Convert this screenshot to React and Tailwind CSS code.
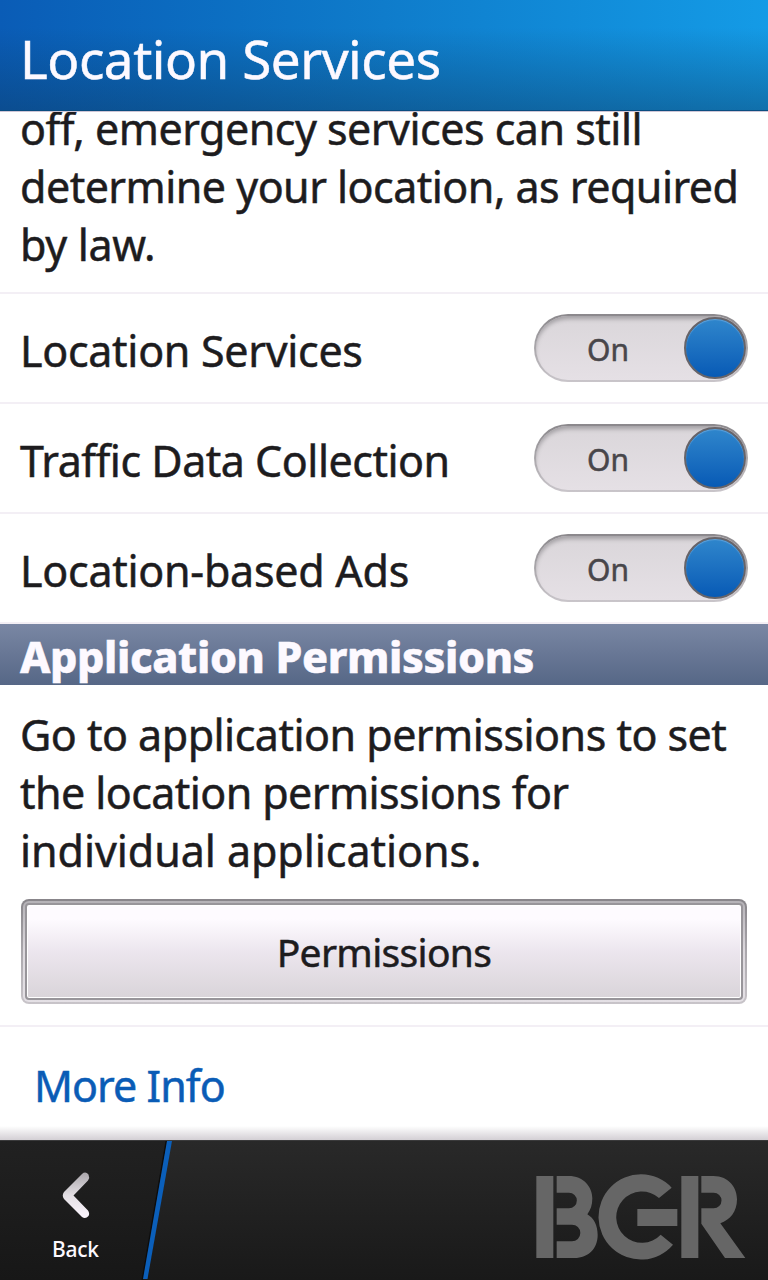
function Line({ className, children }) {
  return <span className={`block whitespace-nowrap ${className}`}>{children}</span>;
}

function Toggle() {
  return (
    <div className="flex h-[68px] w-[214px] items-center rounded-full bg-linear-to-b from-[#8b888c] via-[#aaa7ab] to-[#c9c5ca] p-[2px]">
      <div className="flex h-full w-full items-center justify-between rounded-full bg-linear-to-b from-[#dad6da] to-[#e5e0e5] pl-[51px] shadow-[inset_0_4px_4px_-1px_#a3a0a4]">
        <span className="pt-[3px] text-[30px] leading-[41px] text-[#48464a]">On</span>
        <span className="h-[62px] w-[62px] rounded-full border-2 border-[#676469] bg-linear-to-b from-[#2f86cc] to-[#075ab5] shadow-[inset_0_1px_1px_#62a4dc]" />
      </div>
    </div>
  );
}

function Row({ label, className }) {
  return (
    <div className="flex h-[110px] items-center justify-between border-t-2 border-[#f3eff5] pr-5 pl-5">
      <span className={`pt-[6px] whitespace-nowrap ${className}`}>{label}</span>
      <Toggle />
    </div>
  );
}

function Logo() {
  return (
    <svg className="mt-[32px] mr-[22px] h-[87px] w-[210px] shrink-0" viewBox="50 189 630 261" fill="#666">
      <rect x="51" y="198" width="51" height="246" />
      <path d="M112 198H148C192 198 219 230 219 265C219 285 214 300 204 313C224 325 235 347 235 375C235 415 208 444 165 444H112V394H158A25 25 0 0 0 158 344H112V295H149A23.500 23.500 0 0 0 149 248H112Z" />
      <path d="M457 233A127 128 0 1 0 461 404L424 374A77 77 0 1 1 419 264Z" />
      <rect x="354" y="297" width="120" height="51" />
      <rect x="486" y="198" width="51" height="246" />
      <path d="M546 198H582C630 198 653 235 653 268C653 305 632 330 603 340L678 444H617L546 341V295H583A23.500 23.500 0 0 0 583 248H546Z" />
    </svg>
  );
}

export default function App() {
  return (
    <div className="flex h-[1280px] w-[768px] flex-col overflow-hidden bg-white font-['Noto_Sans',sans-serif] text-[43px] leading-[58px] font-normal text-[#1d1c1e] [-webkit-text-stroke:0.5px_currentColor]">
      <header className="z-10 h-[112px] shrink-0 border-b border-[#cfc6d6] bg-linear-to-r from-[#0a5cb6] via-[#0f7ccb] to-[#149be6]">
        <div className="flex h-full items-center bg-linear-to-b from-transparent from-25% to-[#0c3a62]/45 pl-5 shadow-[inset_0_-1px_0_#0b4d80]">
          <h1 className="pt-[7px] text-[53px] leading-[72px] tracking-[-0.47px] whitespace-nowrap text-[#fdf9ff]">Location Services</h1>
        </div>
      </header>

      <main className="flex min-h-0 flex-1 flex-col">
        <p className="-mt-[12px] h-[192px] shrink-0 pl-5">
          <Line className="tracking-[-0.5px]">off, emergency services can still</Line>
          <Line className="tracking-[-0.53px]">determine your location, as required</Line>
          <Line className="tracking-[-0.35px]">by law.</Line>
        </p>
        <Row label="Location Services" className="tracking-[-0.3px]" />
        <Row label="Traffic Data Collection" className="tracking-[-0.5px]" />
        <Row label="Location-based Ads" className="tracking-[-0.27px]" />
        <h2 className="flex h-[63px] shrink-0 items-center border-t-2 border-[#f3eff5] bg-linear-to-b from-[#7b88a5] to-[#566786] bg-origin-border pt-[4px] pl-5 font-extrabold tracking-[-0.38px] whitespace-nowrap text-[#fdf9ff]">
          Application Permissions
        </h2>
        <p className="shrink-0 pt-[21px] pl-5">
          <Line className="tracking-[-0.52px]">Go to application permissions to set</Line>
          <Line className="tracking-[-0.58px]">the location permissions for</Line>
          <Line className="tracking-[-0.06px]">individual applications.</Line>
        </p>
        <div className="mx-[21px] mt-[19px] h-[105px] shrink-0 rounded-[8px] bg-linear-to-b from-[#88858a] via-[#aaa7ac] to-[#c8c4c9] p-[2px]">
          <div className="h-full rounded-[6px] bg-linear-to-b from-[#b5b2b7] via-[#dcd8dd] to-[#e4e0e5] p-[2px]">
            <button className="flex h-full w-full items-center justify-center rounded-[4px] border-2 border-[#98959a] bg-linear-to-b from-[#fefbff] from-15% via-[#ece6ee] via-50% to-[#d9d4d9] text-[39px] leading-[53px] tracking-[-0.67px] shadow-[inset_0_0_0_1px_#fff]">
              Permissions
            </button>
          </div>
        </div>
        <div className="mt-[21px] flex h-[115px] shrink-0 flex-col justify-between border-t-2 border-[#f3eff5]">
          <a className="block pt-[30px] pl-[34px] tracking-[-0.95px] whitespace-nowrap text-[#0a5cb6]">More Info</a>
          <div className="h-[14px] bg-linear-to-b from-white to-[#d3cfd4]" />
        </div>
      </main>

      <footer className="flex h-[140px] shrink-0 justify-between border-t border-[#3a3a3b] bg-linear-to-b from-[#292929] to-[#191919]">
        <div className="relative h-full w-[176px] shrink-0">
          <svg className="absolute inset-0 h-[139px] w-[176px]" viewBox="0 0 176 139">
            <defs>
              <linearGradient id="tab" x1="0" y1="0" x2="0" y2="1">
                <stop offset="0" stopColor="#212121" />
                <stop offset="1" stopColor="#171717" />
              </linearGradient>
              <linearGradient id="arrow" x1="0" y1="0" x2="0" y2="1">
                <stop offset="0" stopColor="#aaa6ab" />
                <stop offset="0.5" stopColor="#e3dfe4" />
                <stop offset="1" stopColor="#fbf5fd" />
              </linearGradient>
            </defs>
            <path d="M0 0H167L143 139H0Z" fill="url(#tab)" />
            <path d="M166.300 0L142.300 139" stroke="#0c0c0c" strokeWidth="1.500" />
            <path d="M167 0H172L147.500 138H143Z" fill="#0b5fba" />
            <path d="M82 33Q85.500 30 88.500 33.500Q90 36.500 88 39.500L73.500 54.500L88 69.500Q90 72.500 88.500 75Q85.500 78.500 82 76L64 58Q61.500 54.500 64 51Z" fill="url(#arrow)" />
          </svg>
          <span className="relative block pt-[94px] pl-[52px] text-[21px] leading-[29px] font-medium tracking-[-0.3px] text-[#fdf9ff] [-webkit-text-stroke:0]">Back</span>
        </div>
        <Logo />
      </footer>
    </div>
  );
}
